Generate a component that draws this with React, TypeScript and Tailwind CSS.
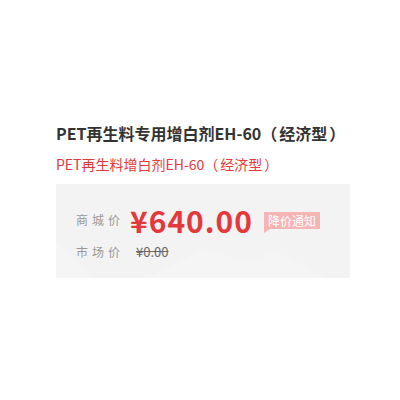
export default function App() {
  const cjk = { fontFamily: '"Microsoft YaHei", "Noto Sans CJK SC", "Noto Sans", sans-serif' };

  return (
    <div className="h-[400px] w-[400px] bg-white pt-[119px] pl-[56px]" style={cjk}>
      <h1 className="text-[16px] font-bold leading-[28px] text-[#333]">
        PET再生料专用增白剂EH-60<span className="mr-[2px]">（</span>经济型<span className="ml-[2px]">）</span>
      </h1>
      <p className="mt-[6px] text-[14px] leading-[22px] text-[#e4393c]">
        PET再生料增白剂EH-60<span className="mr-[2px]">（</span>经济型<span className="ml-[2px]">）</span>
      </p>

      <div className="relative mt-[9px] h-[94px] w-[294px] overflow-hidden bg-[#f3f3f3] pt-[18px] pl-[20px]">
        <svg className="absolute inset-0" width="294" height="94" viewBox="0 0 294 94">
          <polygon points="0,58 40,94 0,94" fill="#f5f5f5" />
          <polygon points="90,94 150,64 190,80 220,68 270,94" fill="#f5f5f5" />
        </svg>
        <div className="relative flex items-center">
          <span className="w-[54px] text-[12px] tracking-[4px] text-[#999]">商城价</span>
          <span className="text-[30px] font-bold leading-[36px] tracking-[1px] text-[#e4393c]">¥640.00</span>
          <span className="relative ml-[11px] bg-[#f5b5b5] px-[4px] text-[12px] leading-[17px] text-white">
            降价通知
            <span className="absolute -bottom-[4px] left-0 h-0 w-0 border-t-[4px] border-r-[6px] border-t-[#f5b5b5] border-r-transparent" />
          </span>
        </div>
        <div className="relative mt-[4px] flex items-center">
          <span className="w-[60px] text-[12px] tracking-[4px] text-[#999]">市场价</span>
          <span className="text-[13px] text-[#666] line-through">¥0.00</span>
        </div>
      </div>
    </div>
  );
}
